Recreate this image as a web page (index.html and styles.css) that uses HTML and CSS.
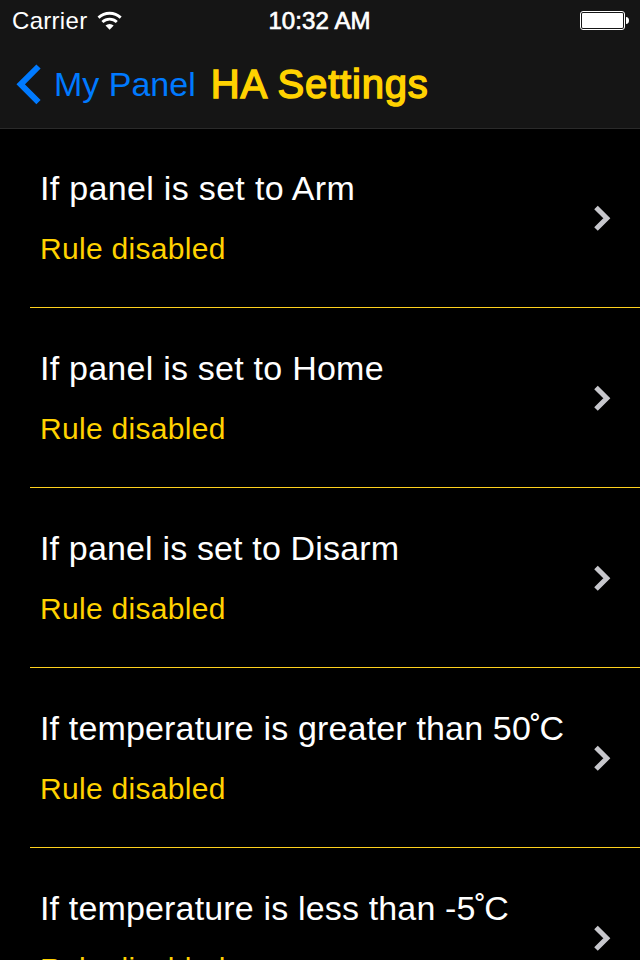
FILE: index.html
```html
<!DOCTYPE html>
<html lang="en">
<head>
<meta charset="utf-8">
<title>HA Settings</title>
<link rel="stylesheet" href="styles.css">
</head>
<body>
<header class="header">
  <div class="status">
    <div class="status-left">
      <span class="carrier">Carrier</span>
      <svg class="wifi" width="26" height="20" viewBox="0 0 26 20" fill="none" stroke="#fff" stroke-width="2.8">
        <path d="M1.5 6.6A16.3 16.3 0 0 1 23.7 6.6"/>
        <path d="M5.4 11.1A10.4 10.4 0 0 1 19.8 11.1"/>
        <path d="M12.6 18.8L8.5 14.5A6.2 6.2 0 0 1 16.7 14.5Z" fill="#fff" stroke="none"/>
      </svg>
    </div>
    <span class="time">10:32 AM</span>
    <svg class="battery" width="50" height="20" viewBox="0 0 50 20">
      <rect x=".5" y=".5" width="44" height="18" rx="2.5" fill="none" stroke="#fff"/>
      <rect x="2" y="2" width="41" height="15" rx="1" fill="#fff"/>
      <path d="M46 6c2 0 3 1.3 3 3.5s-1 3.5-3 3.5z" fill="#fff"/>
    </svg>
  </div>
  <nav class="nav">
    <a class="back">
      <svg width="26" height="42" viewBox="0 0 26 42" fill="none" stroke="#007aff" stroke-width="6"><path d="M23.5 3.5L5.7 21.3L23.5 39.1"/></svg>
      <span class="back-label">My Panel</span>
    </a>
    <h1 class="title">HA Settings</h1>
  </nav>
</header>
<main class="list">
  <div class="row">
    <div class="text"><div class="name name-arm">If panel is set to Arm</div><div class="state">Rule disabled</div></div>
    <svg class="chevron" viewBox="0 0 18 28"><path d="M3 3.5L13.8 14.3L3 25.1"/></svg>
  </div>
  <div class="row">
    <div class="text"><div class="name">If panel is set to Home</div><div class="state">Rule disabled</div></div>
    <svg class="chevron" viewBox="0 0 18 28"><path d="M3 3.5L13.8 14.3L3 25.1"/></svg>
  </div>
  <div class="row">
    <div class="text"><div class="name name-long">If panel is set to Disarm</div><div class="state">Rule disabled</div></div>
    <svg class="chevron" viewBox="0 0 18 28"><path d="M3 3.5L13.8 14.3L3 25.1"/></svg>
  </div>
  <div class="row">
    <div class="text"><div class="name name-long">If temperature is greater than 50<span class="degree">˚</span>C</div><div class="state">Rule disabled</div></div>
    <svg class="chevron" viewBox="0 0 18 28"><path d="M3 3.5L13.8 14.3L3 25.1"/></svg>
  </div>
  <div class="row">
    <div class="text"><div class="name name-long">If temperature is less than -5<span class="degree">˚</span>C</div><div class="state">Rule disabled</div></div>
    <svg class="chevron" viewBox="0 0 18 28"><path d="M3 3.5L13.8 14.3L3 25.1"/></svg>
  </div>
</main>
</body>
</html>
```
FILE: styles.css
```css
* { box-sizing: border-box; }
body {
  margin: 0;
  height: 960px;
  overflow: hidden;
  display: flex;
  flex-direction: column;
  background: #000;
  color: #fff;
  font-family: "Liberation Sans", Arial, sans-serif;
}
.header {
  flex: none;
  height: 129px;
  position: relative;
  z-index: 1;
  background: #151515;
  border-bottom: 1px solid #2a2a2a;
}
.status {
  height: 41px;
  padding: 1px 10px 0 12px;
  display: grid;
  grid-template-columns: 1fr auto 1fr;
  align-items: center;
  font-size: 24px;
  line-height: 40px;
}
.status-left { display: flex; align-items: center; gap: 10px; }
.carrier { letter-spacing: 0.3px; }
.time { margin-left: -3px; -webkit-text-stroke: 0.7px #fff; letter-spacing: 0.1px; }
.battery { justify-self: end; }
.nav {
  height: 85px;
  display: flex;
  align-items: center;
  padding-left: 15px;
}
.back { display: flex; align-items: center; color: #007aff; }
.back-label { margin-left: 13px; font-size: 34px; line-height: 40px; letter-spacing: 0; }
.title {
  margin: 0 0 0 15px;
  font-size: 40px;
  line-height: 46px;
  font-weight: 400;
  letter-spacing: 0.8px;
  color: #ffd200;
  -webkit-text-stroke: 1.5px #ffd200;
}
.list { flex: none; margin-top: -1px; padding-left: 30px; }
.row {
  height: 180px;
  padding: 40px 28px 0 10px;
  display: flex;
  justify-content: space-between;
  border-bottom: 1px solid #ffd21e;
}
.name { font-size: 34px; line-height: 40px; letter-spacing: 0.24px; white-space: nowrap; }
.name-arm { letter-spacing: 0.32px; }
.name-long { letter-spacing: 0.16px; }
.degree { margin: 0 -2px 0 -1px; }
.state { margin-top: 24px; font-size: 30px; line-height: 34px; letter-spacing: 0.3px; color: #ffd200; }
.chevron {
  flex: none;
  width: 18px;
  height: 28px;
  margin: 36px 1px 0 0;
  fill: none;
  stroke: #c7c7cc;
  stroke-width: 5;
}
```
